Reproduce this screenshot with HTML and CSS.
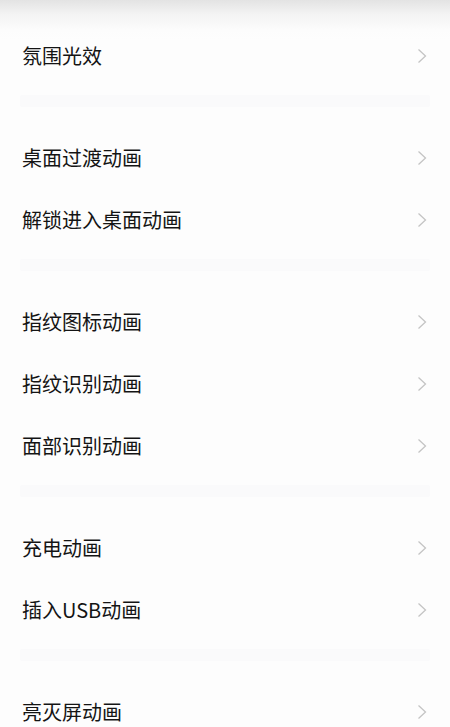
FILE: index.html
```html
<!DOCTYPE html>
<html lang="zh">
<head>
<meta charset="utf-8">
<link rel="stylesheet" href="styles.css">
</head>
<body>
<div class="page">
  <div class="group">
    <div class="row"><span class="label">氛围光效</span><svg class="chev" viewBox="0 0 10 16"><polyline points="1.5,1.5 8.5,8 1.5,14.5"/></svg></div>
  </div>
  <div class="sep"><div class="band"></div></div>
  <div class="group">
    <div class="row"><span class="label">桌面过渡动画</span><svg class="chev" viewBox="0 0 10 16"><polyline points="1.5,1.5 8.5,8 1.5,14.5"/></svg></div>
    <div class="row"><span class="label">解锁进入桌面动画</span><svg class="chev" viewBox="0 0 10 16"><polyline points="1.5,1.5 8.5,8 1.5,14.5"/></svg></div>
  </div>
  <div class="sep"><div class="band"></div></div>
  <div class="group">
    <div class="row"><span class="label">指纹图标动画</span><svg class="chev" viewBox="0 0 10 16"><polyline points="1.5,1.5 8.5,8 1.5,14.5"/></svg></div>
    <div class="row"><span class="label">指纹识别动画</span><svg class="chev" viewBox="0 0 10 16"><polyline points="1.5,1.5 8.5,8 1.5,14.5"/></svg></div>
    <div class="row"><span class="label">面部识别动画</span><svg class="chev" viewBox="0 0 10 16"><polyline points="1.5,1.5 8.5,8 1.5,14.5"/></svg></div>
  </div>
  <div class="sep"><div class="band"></div></div>
  <div class="group">
    <div class="row"><span class="label">充电动画</span><svg class="chev" viewBox="0 0 10 16"><polyline points="1.5,1.5 8.5,8 1.5,14.5"/></svg></div>
    <div class="row"><span class="label">插入USB动画</span><svg class="chev" viewBox="0 0 10 16"><polyline points="1.5,1.5 8.5,8 1.5,14.5"/></svg></div>
  </div>
  <div class="sep"><div class="band"></div></div>
  <div class="group">
    <div class="row"><span class="label">亮灭屏动画</span><svg class="chev" viewBox="0 0 10 16"><polyline points="1.5,1.5 8.5,8 1.5,14.5"/></svg></div>
  </div>
</div>
</body>
</html>
```
FILE: styles.css
```css
html, body {
  margin: 0;
  padding: 0;
}
body {
  background: #fdfdfd linear-gradient(to bottom, #e3e3e3 0px, #f3f3f3 14px, #fcfcfc 30px, #fdfdfd 40px) no-repeat;
  background-size: 100% 40px;
  font-family: "Noto Sans CJK SC", "Noto Sans", sans-serif;
  color: #141414;
  width: 450px;
  height: 727px;
  overflow: hidden;
}
.page {
  padding-top: 25px;
}
.row {
  height: 62px;
  display: flex;
  align-items: center;
  justify-content: space-between;
  padding: 0 22px 0 22px;
}
.label {
  font-size: 20px;
  line-height: 1;
}
.chev {
  width: 10px;
  height: 16px;
  fill: none;
  stroke: #c4c4c4;
  stroke-width: 1.3;
  margin-right: 1px;
}
.sep {
  height: 40px;
  padding: 8px 20px 0;
  box-sizing: border-box;
}
.band {
  height: 12px;
  background: #fafafb;
  border-radius: 2px;
}
```
